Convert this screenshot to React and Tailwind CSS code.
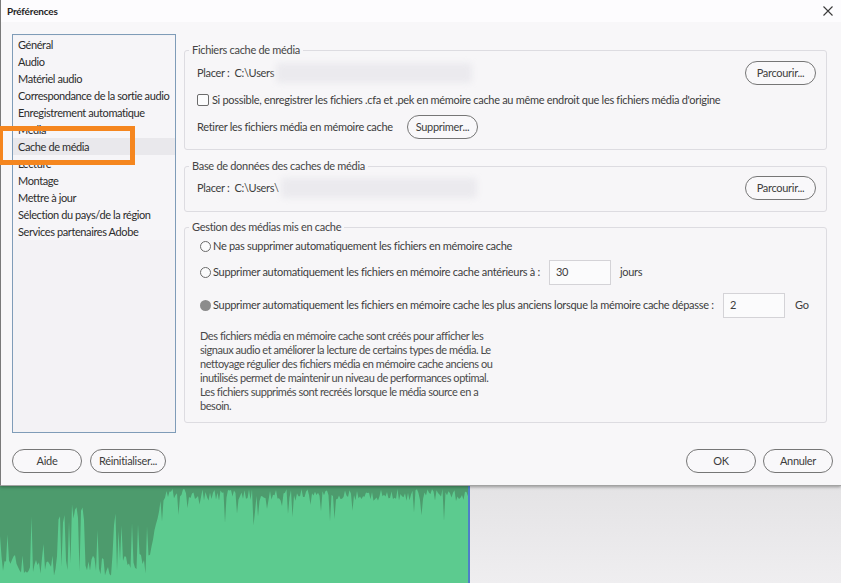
import React from 'react';

const CATEGORIES = [
    'Général',
    'Audio',
    'Matériel audio',
    'Correspondance de la sortie audio',
    'Enregistrement automatique',
    'Média',
    'Cache de média',
    'Lecture',
    'Montage',
    'Mettre à jour',
    'Sélection du pays/de la région',
    'Services partenaires Adobe',
];

const DESCRIPTION = [
    'Des fichiers média en mémoire cache sont créés pour afficher les',
    'signaux audio et améliorer la lecture de certains types de média. Le',
    'nettoyage régulier des fichiers média en mémoire cache anciens ou',
    'inutilisés permet de maintenir un niveau de performances optimal.',
    'Les fichiers supprimés sont recréés lorsque le média source en a',
    'besoin.',
];

/* ── waveform strip under the dialog ── */
const buildWave = () => {
    let seed = 11;
    const rnd = () => {
        seed = (seed * 9301 + 49297) % 233280;
        return seed / 233280;
    };
    const pts = [];
    for (let x = 0; x <= 468; x += 1.5) {
        let top;
        if (x < 148) {
            top = 68 + rnd() * 22;
            if (rnd() > 0.85) top -= 25 + rnd() * 25;
            if (x > 55 && x < 85 && rnd() > 0.5) top = 18 + rnd() * 20;
        } else if (x < 162) {
            top = 70 - ((x - 148) / 14) * 62 + rnd() * 8;
        } else {
            top = 3 + rnd() * 12;
            if (rnd() > 0.9) top += 10 + rnd() * 20;
        }
        pts.push(`${x},${top.toFixed(1)}`);
    }
    return `M0,97 L${pts.join(' L')} L468,97 Z`;
};

const WAVE = buildWave();

const PillButton = ({ children, className = '' }) => (
    <button
        type="button"
        className={`h-[24px] rounded-full border border-[#767676] bg-[#f9f8fa] text-[#3d3d3d] flex items-center justify-center ${className}`}
    >
        {children}
    </button>
);

const Group = ({ legend, className = '', children }) => (
    <fieldset className={`border border-[#dddce1] rounded-[3px] bg-[#f7f6f8] ${className}`}>
        <legend className="ml-[4px] px-[3px] leading-[14px] text-[#454545]">{legend}</legend>
        {children}
    </fieldset>
);

const Radio = ({ filled }) =>
    filled ? (
        <span className="w-[11px] h-[11px] rounded-full bg-[#8c8c8c] shrink-0" />
    ) : (
        <span className="w-[11px] h-[11px] rounded-full border border-[#6a6a6a] bg-[#fbfbfc] shrink-0" />
    );

const BlurredPath = () => (
    <span className="ml-[2px] w-[196px] h-[20px] bg-[#ebeaee] blur-[3px] rounded-sm" />
);

export default function App() {
    return (
        <div className="relative w-[841px] h-[583px] overflow-hidden bg-[#e8e7e9] font-['Lato',sans-serif] text-[11px] tracking-[-0.3px] text-[#3d3d3d]">
            {/* ── Dialog ── */}
            <div className="relative z-10 h-[486px] flex flex-col bg-[#f8f7f9] border-l border-[#7a7a7a] border-b border-b-[#a3a3a3] shadow-[0_1px_3px_rgba(0,0,0,0.35)]">
                <div className="h-[22px] shrink-0 bg-[#fdfcfe] flex items-center justify-between pl-[6px] pr-[4px]">
                    <span className="text-[10px] font-bold text-[#1f1f1f] tracking-[-0.2px]">Préférences</span>
                    <svg width="12" height="12" viewBox="0 0 12 12" className="mr-[3px]">
                        <path d="M1.5 1.5 L10.5 10.5 M10.5 1.5 L1.5 10.5" stroke="#3a3a3a" strokeWidth="1.1" />
                    </svg>
                </div>

                <div className="flex pt-[12px]">
                    {/* category list */}
                    <div className="ml-[11px] w-[164px] h-[399px] border border-[#7f9cb8] bg-[#f3f2f5] pt-[1px] tracking-[-0.4px]">
                        {CATEGORIES.map((c) => (
                            <div
                                key={c}
                                className={`h-[17px] leading-[17px] pl-[5px] text-[#2c2c2c] whitespace-nowrap ${
                                    c === 'Cache de média' ? 'bg-[#e9e8ec]' : 'bg-[#f6f5f8]'
                                }`}
                            >
                                {c}
                            </div>
                        ))}
                    </div>

                    {/* settings pane */}
                    <div className="ml-[8px] w-[643px]">
                        <Group legend="Fichiers cache de média" className="mt-[9px]">
                            <div className="pl-[12px] pr-[10px] pt-[5px] pb-[11px]">
                                <div className="h-[22px] flex items-center">
                                    <span className="whitespace-pre">Placer :  C:\Users</span>
                                    <BlurredPath />
                                    <PillButton className="ml-auto w-[71px]">Parcourir...</PillButton>
                                </div>
                                <div className="mt-[9px] h-[14px] flex items-center">
                                    <span className="w-[12px] h-[12px] border border-[#6c6c6c] rounded-[2px] bg-[#fcfcfd] shrink-0" />
                                    <span className="ml-[3px] whitespace-nowrap">
                                        Si possible, enregistrer les fichiers .cfa et .pek en mémoire cache au même endroit que les fichiers média d'origine
                                    </span>
                                </div>
                                <div className="mt-[9px] h-[22px] flex items-center">
                                    <span className="w-[210px] whitespace-nowrap">Retirer les fichiers média en mémoire cache</span>
                                    <PillButton className="w-[71px]">Supprimer...</PillButton>
                                </div>
                            </div>
                        </Group>

                        <Group legend="Base de données des caches de média" className="mt-[9px]">
                            <div className="pl-[12px] pr-[10px] pt-[4px] pb-[12px]">
                                <div className="h-[22px] flex items-center">
                                    <span className="whitespace-pre">Placer :  C:\Users\</span>
                                    <BlurredPath />
                                    <PillButton className="ml-auto w-[71px]">Parcourir...</PillButton>
                                </div>
                            </div>
                        </Group>

                        <Group legend="Gestion des médias mis en cache" className="mt-[8px]">
                            <div className="pl-[15px] pr-[10px] pt-[5px] pb-[9px]">
                                <div className="h-[14px] flex items-center">
                                    <Radio />
                                    <span className="ml-[2px] whitespace-nowrap">Ne pas supprimer automatiquement les fichiers en mémoire cache</span>
                                </div>
                                <div className="mt-[7px] h-[25px] flex items-center">
                                    <Radio />
                                    <span className="ml-[2px] w-[336px] whitespace-nowrap">
                                        Supprimer automatiquement les fichiers en mémoire cache antérieurs à :
                                    </span>
                                    <span className="w-[62px] h-[25px] border border-[#d4d3d7] bg-[#fbfbfc] pl-[6px] flex items-center">30</span>
                                    <span className="ml-[9px]">jours</span>
                                </div>
                                <div className="mt-[8px] h-[25px] flex items-center">
                                    <Radio filled />
                                    <span className="ml-[2px] w-[510px] whitespace-nowrap">
                                        Supprimer automatiquement les fichiers en mémoire cache les plus anciens lorsque la mémoire cache dépasse :
                                    </span>
                                    <span className="w-[62px] h-[25px] border border-[#d4d3d7] bg-[#fbfbfc] pl-[6px] flex items-center">2</span>
                                    <span className="ml-[10px]">Go</span>
                                </div>
                                <p className="mt-[11px] leading-[14px] tracking-[-0.45px] text-[#4a4a4a]">
                                    {DESCRIPTION.map((l) => (
                                        <span key={l} className="block whitespace-nowrap">{l}</span>
                                    ))}
                                </p>
                            </div>
                        </Group>
                    </div>
                </div>

                <div className="mt-[16px] flex items-center pl-[11px] pr-[8px]">
                    <PillButton className="w-[70px]">Aide</PillButton>
                    <PillButton className="ml-[8px] w-[76px]">Réinitialiser...</PillButton>
                    <PillButton className="ml-auto w-[70px]">OK</PillButton>
                    <PillButton className="ml-[7px] w-[70px]">Annuler</PillButton>
                </div>

                {/* orange annotation frame */}
                <div className="absolute left-[-3px] top-[126px] w-[137px] h-[39px] border-[5px] border-[#f5861f]" />
            </div>

            {/* ── Track behind the dialog ── */}
            <div className="flex h-[97px]">
                <svg width="468" height="97" viewBox="0 0 468 97" className="shrink-0">
                    <rect width="468" height="97" fill="#4d9b6d" />
                    <path d={WAVE} fill="#5ccb8f" />
                </svg>
                <div className="w-[2px] bg-[#4f7fc8]" />
                <div className="flex-1 bg-gradient-to-b from-[#e4e3e5] to-[#efeef0]" />
            </div>
        </div>
    );
}
